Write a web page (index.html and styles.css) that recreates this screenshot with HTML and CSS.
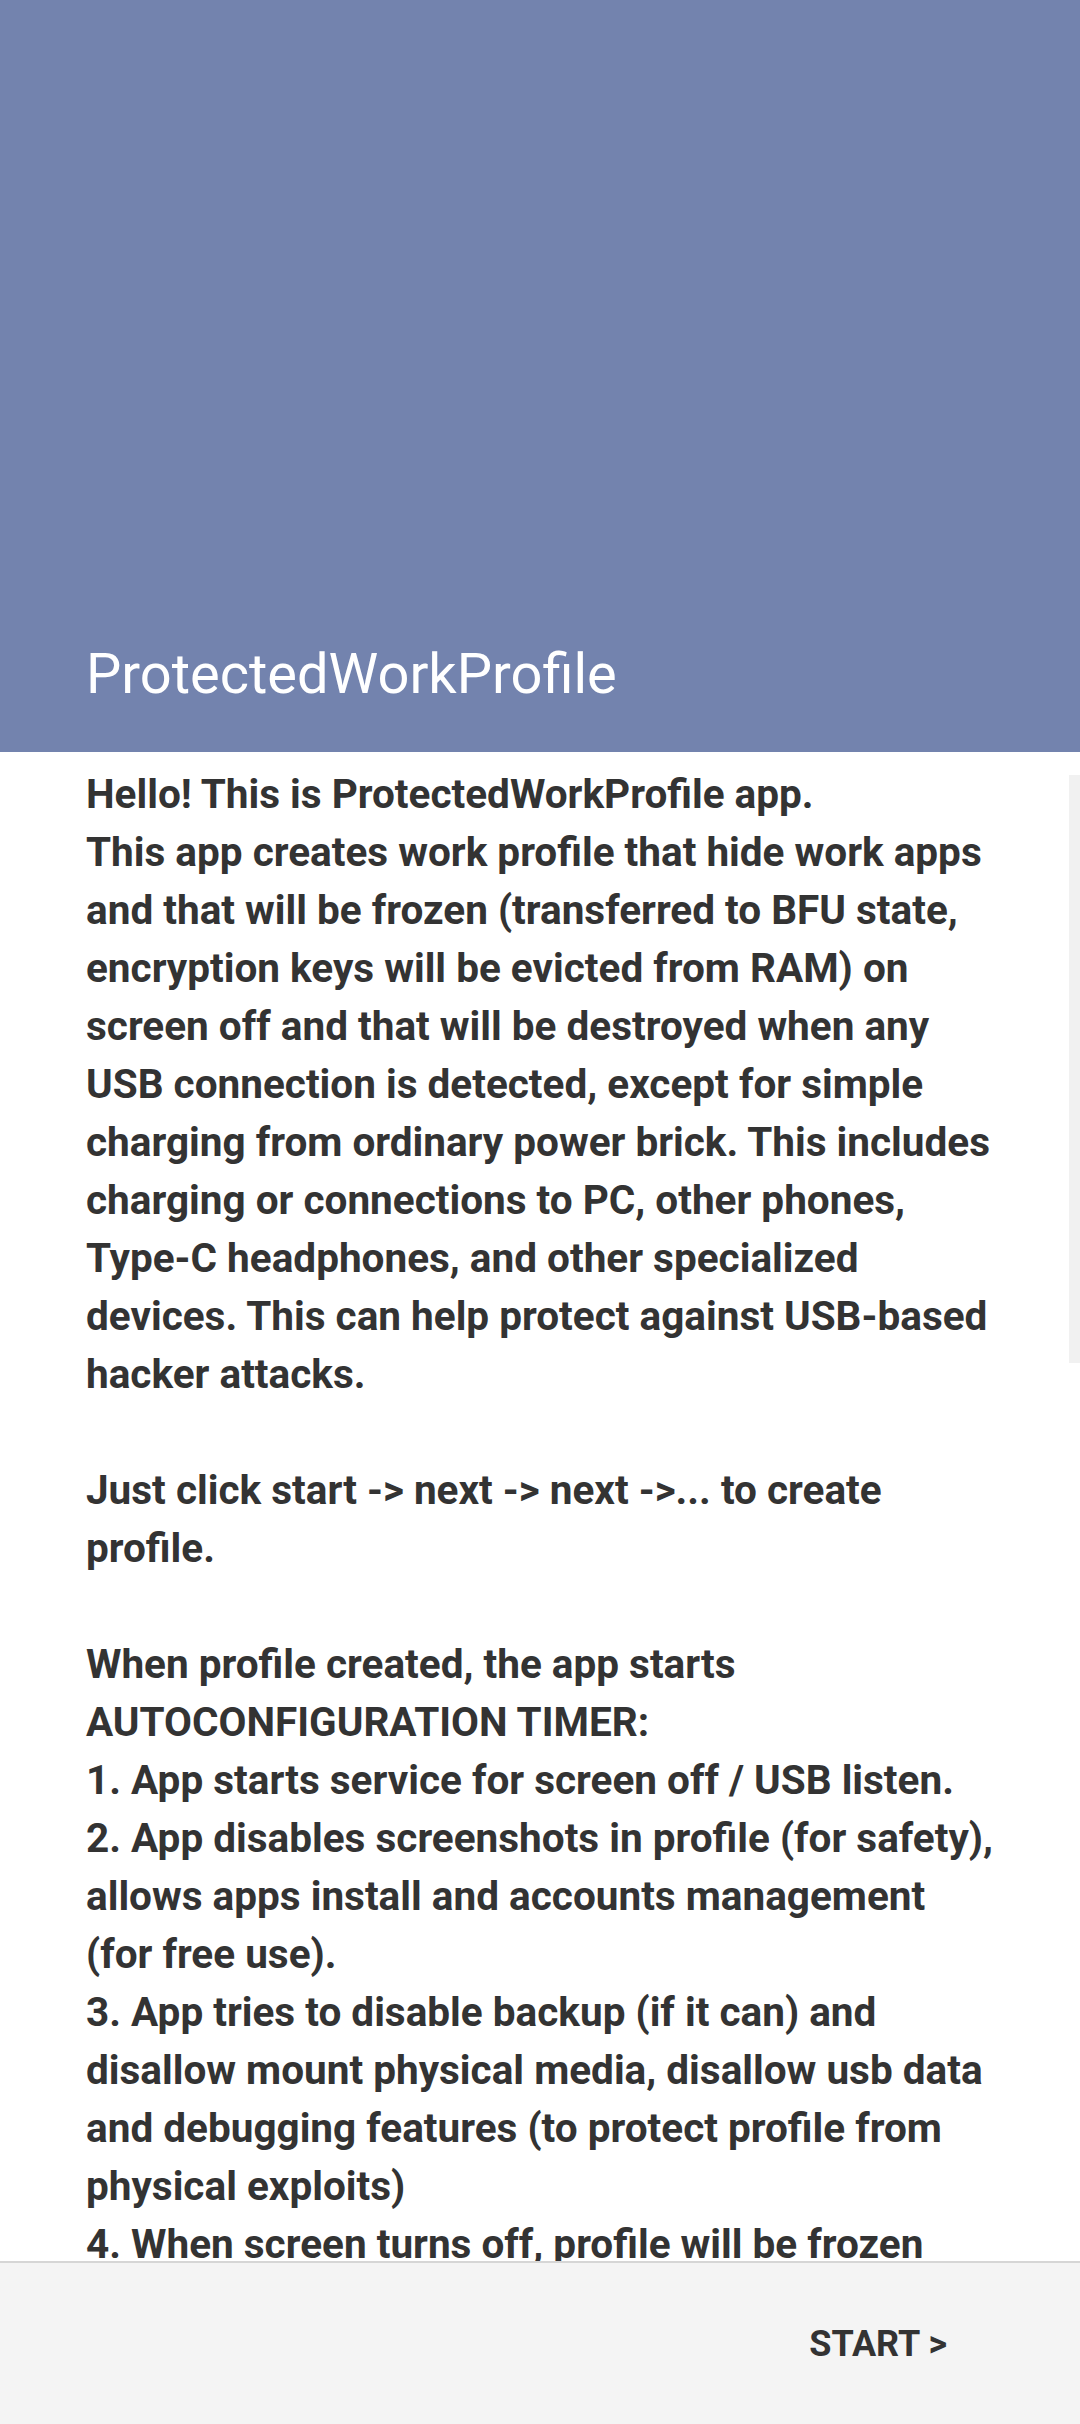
FILE: index.html
```html
<!DOCTYPE html>
<html lang="en">
<head>
<meta charset="utf-8">
<title>ProtectedWorkProfile</title>
<link rel="stylesheet" href="styles.css">
</head>
<body>
<div class="screen">
  <header class="appbar">
    <h1 class="title">ProtectedWorkProfile</h1>
  </header>
  <main class="content">
    <div class="scrollthumb"></div>
    <p class="text">Hello! This is ProtectedWorkProfile app.<br>This app creates work profile that hide work apps<br>and that will be frozen (transferred to BFU state,<br>encryption keys will be evicted from RAM) on<br>screen off and that will be destroyed when any<br>USB connection is detected, except for simple<br>charging from ordinary power brick. This includes<br>charging or connections to PC, other phones,<br>Type-C headphones, and other specialized<br>devices. This can help protect against USB-based<br>hacker attacks.<br><br>Just click start -&gt; next -&gt; next -&gt;... to create<br>profile.<br><br>When profile created, the app starts<br>AUTOCONFIGURATION TIMER:<br>1. App starts service for screen off / USB listen.<br>2. App disables screenshots in profile (for safety),<br>allows apps install and accounts management<br>(for free use).<br>3. App tries to disable backup (if it can) and<br>disallow mount physical media, disallow usb data<br>and debugging features (to protect profile from<br>physical exploits)<br>4. When screen turns off, profile will be frozen</p>
  </main>
  <footer class="bottombar">
    <span class="startbtn">START &gt;</span>
  </footer>
</div>
</body>
</html>
```
FILE: styles.css
```css
html, body {
  margin: 0;
  padding: 0;
  background: #ffffff;
}
.screen {
  width: 1080px;
  height: 2424px;
  display: flex;
  flex-direction: column;
  overflow: hidden;
  font-family: Roboto, "Noto Sans", sans-serif;
}
.appbar {
  height: 752px;
  flex: 0 0 752px;
  background: #7383ae;
  display: flex;
  flex-direction: column;
  justify-content: flex-end;
  padding: 0 86px 44px 86px;
  box-sizing: border-box;
}
.title {
  margin: 0;
  font-size: 56px;
  line-height: 68px;
  font-weight: 400;
  color: #ffffff;
}
.content {
  flex: 1 1 auto;
  position: relative;
  overflow: hidden;
  padding: 13px 86px 0 86px;
}
.scrollthumb {
  position: absolute;
  right: 0;
  top: 23px;
  width: 11px;
  height: 588px;
  background: #f1f1f1;
}
.text {
  margin: 0;
  font-size: 40.5px;
  line-height: 58px;
  font-weight: 700;
  color: #333333;
  white-space: nowrap;
}
.bottombar {
  flex: 0 0 161px;
  height: 161px;
  background: #f4f4f4;
  border-top: 2px solid #d6d6d6;
  display: flex;
  align-items: center;
  justify-content: flex-end;
  padding-right: 133px;
}
.startbtn {
  font-size: 36px;
  font-weight: 700;
  color: #333333;
  line-height: 40px;
}
```
